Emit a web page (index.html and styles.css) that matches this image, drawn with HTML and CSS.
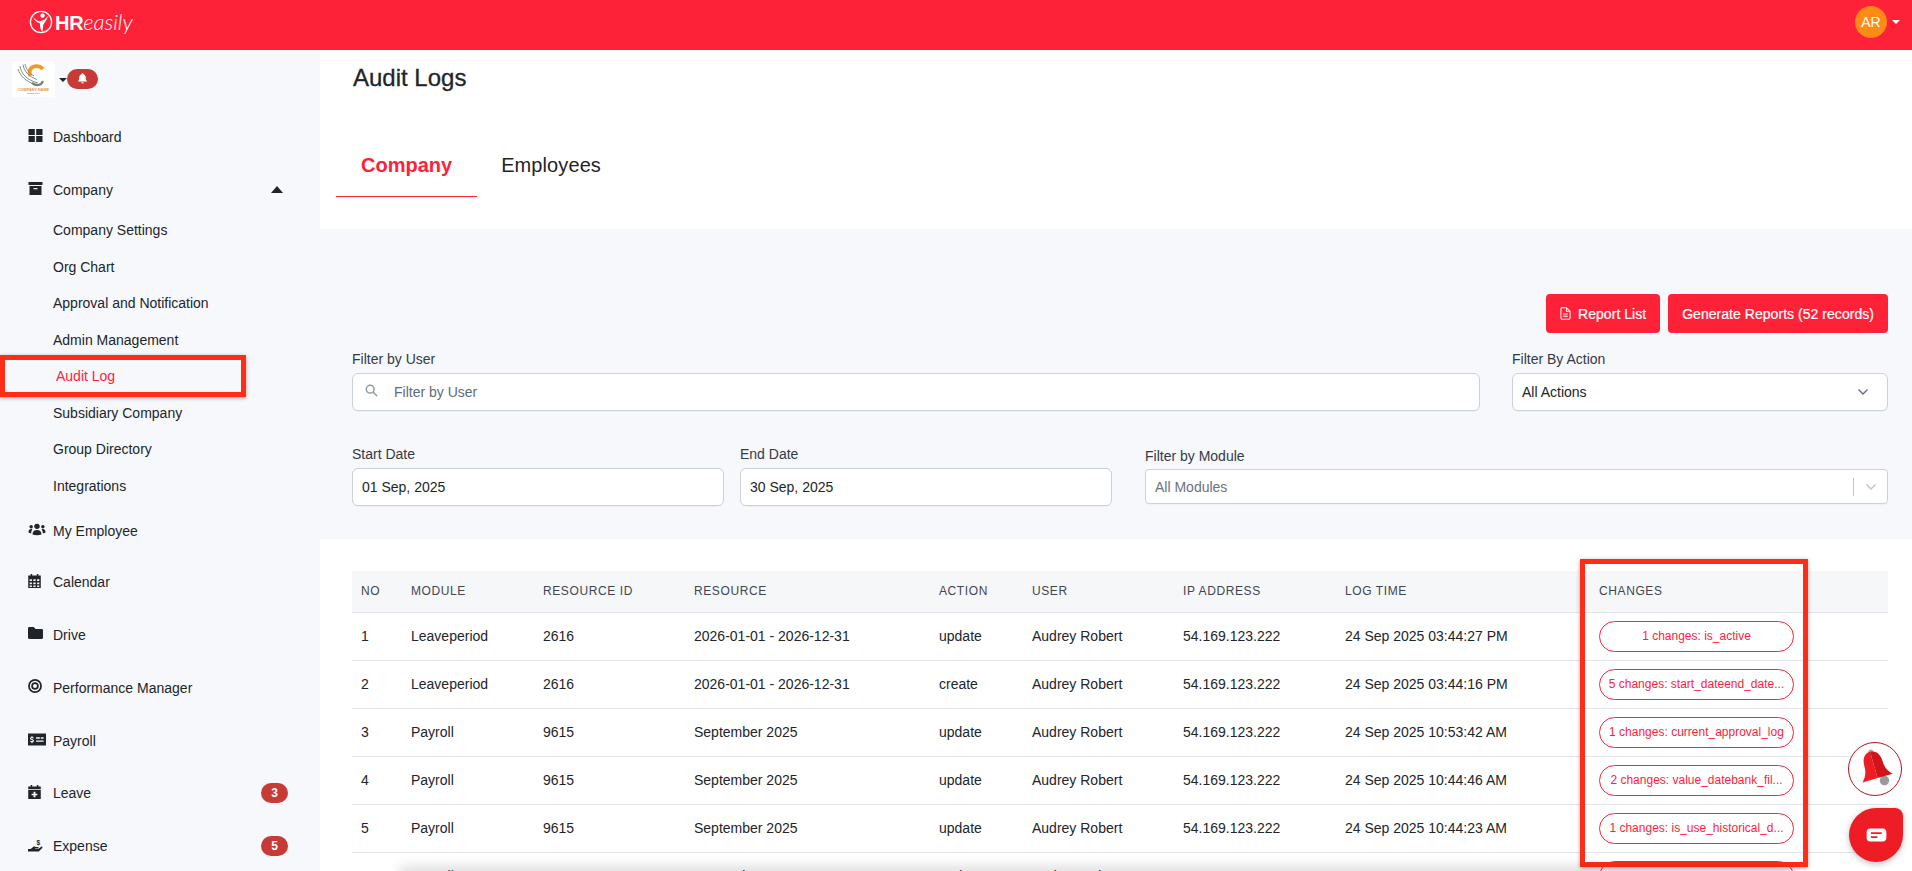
FILE: index.html
```html
<!DOCTYPE html>
<html lang="en">
<head>
<meta charset="utf-8">
<title>Audit Logs</title>
<link rel="stylesheet" href="styles.css">
</head>
<body>
<header class="topbar">
  <div class="brand">
    <svg class="brand-mark" viewBox="0 0 24 24" fill="none" stroke="#fff"><circle cx="12" cy="12" r="10.600" stroke-width="1.300"/><circle cx="13.500" cy="5.600" r="2.200" fill="#fff" stroke="none"/><path d="M4 6.500c2 3.500 4.500 4.500 7 4.800l4.600-1.800 4-4-3 5.800-2.200 3.200-1 7.500c-2-2.500-2.600-5.500-2.400-8.600C8 12.500 5 10.500 4 6.500z" fill="#fff" stroke="none"/></svg>
    <span class="brand-name"><b>HR</b><i>easily</i></span>
  </div>
  <div class="account"><span class="avatar">AR</span><span class="caret-down white"></span></div>
</header>
<div class="shell">
  <aside class="sidebar">
    <div class="org">
      <svg class="org-logo" viewBox="0 0 43 36" fill="none">
        <rect width="43" height="36" fill="#fff"/>
        <path d="M31 8c-4-4-11-4-13 1-.8 2-.6 4 .5 6" stroke="#f59a23" stroke-width="3.800"/>
        <path d="M8 5c1 8 7 14 18 17M11 3.500c1 7 6 12 14 15M6 8c2 7 8 13 19 16M13 3c1 5 4 9 9 12" stroke="#6f8385" stroke-width=".9"/>
        <path d="M20 22c4 3 9 3 11-2" stroke="#6f8385" stroke-width="2.200"/>
        <text x="21.500" y="29.800" class="org-name" text-anchor="middle">COMPANY NAME</text>
        <text x="21.500" y="33" class="org-tag" text-anchor="middle">slogan here</text>
      </svg>
      <span class="caret-down small"></span>
      <span class="bell-pill"><svg viewBox="1.500 1.500 13 13.500" class="bell-ico"><path d="M8 1.500c-.6 0-1 .4-1 1v.5C5 3.500 4 5.200 4 7c0 3-1 4-2 5h12c-1-1-2-2-2-5 0-1.800-1-3.500-3-4v-.500c0-.6-.4-1-1-1zM6.500 13a1.500 1.500 0 0 0 3 0z" fill="#fff"/></svg></span>
    </div>
    <nav class="nav">
      <a class="nav-item"><svg class="ico" viewBox="1 1.500 14 13"><path d="M1 1.500h6.300v6H1zM8.700 1.500H15v6H8.700zM1 8.500h6.300v6H1zM8.700 8.500H15v6H8.700z"/></svg>Dashboard</a>
      <a class="nav-item"><svg class="ico" viewBox="1 1 14 13"><path d="M1 1h14v3H1zM2 5h12v9H2zM6 7v1.300h4V7z" fill-rule="evenodd"/></svg>Company<span class="caret-up"></span></a>
      <div class="subnav">
        <a class="sub-item">Company Settings</a>
        <a class="sub-item">Org Chart</a>
        <a class="sub-item">Approval and Notification</a>
        <a class="sub-item">Admin Management</a>
        <a class="sub-item active">Audit Log</a>
        <a class="sub-item">Subsidiary Company</a>
        <a class="sub-item">Group Directory</a>
        <a class="sub-item">Integrations</a>
      </div>
      <a class="nav-item"><svg class="ico wide" viewBox="0 1 20 13"><circle cx="10" cy="4" r="3"/><circle cx="3.500" cy="4.500" r="1.900"/><circle cx="16.500" cy="4.500" r="1.900"/><path d="M5 13c0-3 1.500-5 5-5s5 2 5 5c-3 1-7 1-10 0zM.5 10.500c0-2 1-3.500 3-3.500.6 0 1 .1 1.400.4C3.900 8.500 3.500 10 3.500 11.800 2 11.700 1 11.300.5 10.500zM19.500 10.500c0-2-1-3.500-3-3.500-.6 0-1 .1-1.400.4 1 1.100 1.400 2.600 1.400 4.400 1.500-.1 2.500-.5 3-1.300z"/></svg>My Employee</a>
      <a class="nav-item"><svg class="ico narrow" viewBox="1.500 .5 13 14.500"><path fill-rule="evenodd" d="M4 .5h1.600V2h4.800V.5H12V2h2.500v13h-13V2H4zM3 6v1.700h2.300V6zM6.800 6v1.700h2.400V6zM10.700 6v1.700H13V6zM3 9.200V11h2.300V9.200zM6.800 9.200V11h2.400V9.200zM10.700 9.200V11H13V9.200zM3 12.300V14h2.300v-1.700zM6.800 12.300V14h2.400v-1.700zM10.700 12.300V14H13v-1.700z"/></svg>Calendar</a>
      <a class="nav-item"><svg class="ico short" viewBox=".5 2 15 11.800"><path d="M.5 3.500C.5 2.700 1 2 1.800 2h4.400l1.800 2h6.300c.8 0 1.200.6 1.200 1.300v7.200c0 .8-.5 1.300-1.200 1.300H1.800c-.8 0-1.300-.5-1.300-1.300z"/></svg>Drive</a>
      <a class="nav-item"><svg class="ico outline" viewBox="0 0 16 16"><circle cx="8" cy="8" r="6.900" stroke-width="2"/><circle cx="8" cy="8" r="3.300" stroke-width="2"/></svg>Performance Manager</a>
      <a class="nav-item"><svg class="ico wide" viewBox=".5 2 19 12.500"><path fill-rule="evenodd" d="M.5 2h19v12.500H.5zM9 6v1.500h4V6zM14 6v1.500h3V6zM9 9.300v1.400h8V9.300zM4.200 4.500v1.200c-1 .2-1.500.8-1.500 1.500 0 1.800 2.900 1.300 2.900 2.300 0 .7-1.700.5-2.700.1v1.100c.4.2.8.3 1.300.4v1.200h1v-1.200c1-.2 1.600-.8 1.600-1.600 0-1.800-3-1.500-3-2.300 0-.6 1.500-.4 2.500-.1V5.900c-.3-.1-.7-.2-1.100-.3V4.500z"/></svg>Payroll</a>
      <a class="nav-item"><svg class="ico narrow" viewBox="1.500 .5 13 14.500"><path fill-rule="evenodd" d="M4 .5h1.600V2h4.800V.5H12V2h2.500v13h-13V2H4zM1.500 5v.8h13V5zM7 7.500v2H5v1.600h2v2h2v-2h2V9.500H9v-2z"/></svg>Leave<span class="count">3</span></a>
      <a class="nav-item"><svg class="ico tall" viewBox="0 0 16 16"><path d="M0 12.300h2.800l2.600-2.200c.9-.7 1.900-.7 2.700 0h2.600c.9 0 .9 1.400 0 1.400H7.800c-.4 0-.4.5 0 .5h3.400l2.900-2.100c.9-.6 1.900.5 1.100 1.200L11.600 15H0z"/><text x="9" y="7.500" class="ico-dollar">$</text></svg>Expense<span class="count">5</span></a>
    </nav>
  </aside>
  <main class="main">
    <section class="head">
      <h1 class="title">Audit Logs</h1>
      <div class="tabs">
        <a class="tab current">Company</a>
        <a class="tab">Employees</a>
      </div>
    </section>
    <section class="filters">
      <div class="actions">
        <button class="btn"><svg class="btn-ico" viewBox="0 0 12 14" fill="none" stroke="#fff" stroke-width="1.100"><path d="M1 1.800c0-.6.4-1 1-1h5l4 3.700v7.700c0 .6-.4 1-1 1H2c-.6 0-1-.4-1-1z"/><path d="M7 .8v3.700h4M3.500 7.500h5M3.500 10h5"/></svg>Report List</button>
        <button class="btn">Generate Reports (52 records)</button>
      </div>
      <div class="row-one">
        <div class="field"><label class="label">Filter by User</label>
          <div class="control search"><svg class="search-ico" viewBox="0 0 14 14" fill="none" stroke="#8d97a5" stroke-width="1.600"><circle cx="5.600" cy="5.600" r="4.200"/><path d="M8.800 8.800L13 13"/></svg><span class="placeholder">Filter by User</span></div></div>
        <div class="field"><label class="label">Filter By Action</label>
          <div class="control between"><span>All Actions</span><svg class="chev" viewBox="0 0 12 8" fill="none" stroke="#5f6b7a" stroke-width="1.300"><path d="M1.500 1.500L6 6l4.500-4.500"/></svg></div></div>
      </div>
      <div class="row-two">
        <div class="field"><label class="label">Start Date</label><div class="control">01 Sep, 2025</div></div>
        <div class="field"><label class="label">End Date</label><div class="control">30 Sep, 2025</div></div>
        <div class="field module"><label class="label">Filter by Module</label>
          <div class="control select-like"><span class="muted">All Modules</span><span class="sep"></span><svg class="chev light" viewBox="0 0 12 8" fill="none" stroke="#c4c4c4" stroke-width="1.500"><path d="M1.500 1.500L6 6l4.500-4.500"/></svg></div></div>
      </div>
    </section>
    <section class="results">
      <table class="log">
        <colgroup><col class="c1"><col class="c2"><col class="c3"><col class="c4"><col class="c5"><col class="c6"><col class="c7"><col class="c8"><col></colgroup>
        <thead><tr><th>NO</th><th>MODULE</th><th>RESOURCE ID</th><th>RESOURCE</th><th>ACTION</th><th>USER</th><th>IP ADDRESS</th><th>LOG TIME</th><th>CHANGES</th></tr></thead>
        <tbody>
          <tr><td>1</td><td>Leaveperiod</td><td>2616</td><td>2026-01-01 - 2026-12-31</td><td>update</td><td>Audrey Robert</td><td>54.169.123.222</td><td>24 Sep 2025 03:44:27 PM</td><td><span class="pill">1 changes: is_active</span></td></tr>
          <tr><td>2</td><td>Leaveperiod</td><td>2616</td><td>2026-01-01 - 2026-12-31</td><td>create</td><td>Audrey Robert</td><td>54.169.123.222</td><td>24 Sep 2025 03:44:16 PM</td><td><span class="pill">5 changes: start_dateend_date...</span></td></tr>
          <tr><td>3</td><td>Payroll</td><td>9615</td><td>September 2025</td><td>update</td><td>Audrey Robert</td><td>54.169.123.222</td><td>24 Sep 2025 10:53:42 AM</td><td><span class="pill">1 changes: current_approval_log</span></td></tr>
          <tr><td>4</td><td>Payroll</td><td>9615</td><td>September 2025</td><td>update</td><td>Audrey Robert</td><td>54.169.123.222</td><td>24 Sep 2025 10:44:46 AM</td><td><span class="pill">2 changes: value_datebank_fil...</span></td></tr>
          <tr><td>5</td><td>Payroll</td><td>9615</td><td>September 2025</td><td>update</td><td>Audrey Robert</td><td>54.169.123.222</td><td>24 Sep 2025 10:44:23 AM</td><td><span class="pill">1 changes: is_use_historical_d...</span></td></tr>
          <tr><td>6</td><td>Payroll</td><td>9615</td><td>September 2025</td><td>update</td><td>Audrey Robert</td><td>54.169.123.222</td><td>24 Sep 2025 10:44:01 AM</td><td><span class="pill">1 changes</span></td></tr>
        </tbody>
      </table>
    </section>
  </main>
</div>
<div class="mark mark-nav"></div>
<div class="mark mark-col"></div>
<div class="fade"></div>
<div class="float-bell"><svg viewBox="0 0 40 40"><circle cx="29" cy="31" r="4.500" fill="#999"/><circle cx="16" cy="4" r="2.500" fill="#aaa"/><g transform="rotate(-16 20 20)"><path d="M20 3c-6 0-9 5-9 12 0 6-2 10-6 14h15z" fill="#ee1c25"/><path d="M20 3c6 0 9 5 9 12 0 6 2 10 6 14H20z" fill="#cf141c"/></g></svg></div>
<div class="float-chat"><svg viewBox="0 0 22 16"><path fill-rule="evenodd" d="M4 .5h14c2 0 3.500 1.500 3.500 3.500v7c0 2-1.500 3.500-3.500 3.500H4c-2 0-3.500-1.500-3.500-3.500V4C.5 2 2 .5 4 .5zM5 4.500v2h11.500v-2zM5 8.700v2h7v-2z" fill="#fff"/></svg></div>
</body>
</html>
```
FILE: styles.css
```css
* { box-sizing: border-box; }
html, body { margin: 0; height: 871px; overflow: hidden; }
body { font-family: "Liberation Sans", Arial, sans-serif; font-size: 14px; color: #212529; background: #fff; }
a { color: inherit; text-decoration: none; }

.topbar { height: 50px; background: #fe2238; display: flex; align-items: center; justify-content: space-between; padding: 0 12px 6px 29px; }
.brand { display: flex; align-items: center; gap: 2px; color: #fff; }
.brand-mark { width: 24px; height: 24px; }
.brand-name { font-size: 20px; line-height: 24px; }
.brand-name b { font-weight: 700; letter-spacing: -.3px; }
.brand-name i { font-weight: 300; font-family: "Lato", sans-serif; font-size: 22px; }
.account { display: flex; align-items: center; gap: 5px; }
.avatar { width: 32px; height: 32px; border-radius: 50%; background: #ff8b17; color: #fff; display: flex; align-items: center; justify-content: center; font-size: 14px; }
.caret-down { width: 0; height: 0; border-left: 4px solid transparent; border-right: 4px solid transparent; border-top: 4px solid #212529; }
.caret-down.white { border-top-color: #fff; border-left-width: 4.5px; border-right-width: 4.5px; }

.shell { display: flex; height: 821px; }
.sidebar { width: 320px; flex: none; background: #f6f8fc; padding: 11px 0 0 12px; }
.org { display: flex; align-items: center; height: 36px; }
.org-logo { width: 43px; height: 36px; flex: none; }
.org-name { font: 700 3.800px "Liberation Sans", sans-serif; fill: #e8952a; }
.org-tag { font: 2.500px "Liberation Sans", sans-serif; fill: #666; }
.caret-down.small { margin: 2px 0 0 4px; }
.bell-pill { width: 31px; height: 20px; margin: -1px 0 0 0; border-radius: 10px; background: #c73a35; display: flex; align-items: center; justify-content: center; }
.bell-ico { width: 11px; height: 11px; }

.nav { margin-top: 14px; margin-left: -12px; display: flex; flex-direction: column; color: #212529; }
.nav-item { display: flex; align-items: center; height: 52.8px; padding-left: 28px; font-size: 14px; }
.ico { width: 15px; height: 13px; margin: -3px 10px 0 0; fill: #212529; flex: none; }
.ico.wide { width: 18px; height: 13px; margin-right: 7px; }
.ico.narrow { width: 13px; height: 14px; margin-right: 12px; }
.ico.short { height: 12px; }
.ico.tall { height: 16px; }
.ico.outline { width: 14px; height: 14px; margin-right: 11px; fill: none; stroke: #212529; }
.ico-dollar { font: 700 7px "Liberation Sans", sans-serif; fill: #212529; }
.caret-up { margin: -1px 37px 0 auto; width: 0; height: 0; border-left: 6px solid transparent; border-right: 6px solid transparent; border-bottom: 7px solid #212529; }
.subnav { display: flex; flex-direction: column; margin-top: -4.5px; margin-bottom: 1.3px; }
.subnav + .nav-item { height: 50.4px; }
.sub-item { height: 36.5px; display: flex; align-items: center; padding-left: 53px; }
.sub-item.active { color: #fe2238; padding-left: 56px; }
.count { margin: -1px 32px 0 auto; width: 27px; height: 20px; border-radius: 10px; background: #c73a35; color: #fff; font-weight: 700; font-size: 12px; display: flex; align-items: center; justify-content: center; }

.main { flex: 1; min-width: 0; background: #fff; overflow: hidden; }
.head { height: 179px; padding: 13px 24px 0 16px; }
.title { margin: 0 0 0 17px; font-size: 24px; line-height: 29px; font-weight: 400; color: #212529; -webkit-text-stroke: .3px #212529; }
.tabs { display: flex; margin-top: 44px; }
.tab { padding: 18px 25px 19px; font-size: 20px; line-height: 23px; color: #1f1f1f; letter-spacing: .1px; border-bottom: 1px solid transparent; }
.tab + .tab { padding-left: 24px; }
.tab.current { color: #fe2238; font-weight: 700; letter-spacing: 0; border-bottom-color: #fe2238; }

.filters { height: 310px; background: #f6f8fc; padding: 65px 24px 0 32px; }
.actions { display: flex; justify-content: flex-end; gap: 8px; }
.btn { height: 39px; border: 0; border-radius: 4px; background: #fe2238; color: #fff; font: 14px "Liberation Sans", Arial, sans-serif; letter-spacing: .04px; padding: 0 14px; display: flex; align-items: center; gap: 7px; -webkit-text-stroke: .2px #fff; }
.btn-ico { width: 11px; height: 13px; }
.row-one { display: grid; grid-template-columns: 1128px 376px; gap: 32px; margin-top: 18px; }
.row-two { display: grid; grid-template-columns: 372px 372px 760px; gap: 16px; margin-top: 35px; }
.field { display: flex; flex-direction: column; gap: 6px; }
.label { font-size: 14px; line-height: 16px; color: #343a46; }
.control { height: 38px; background: #fff; border: 1px solid #ccd0d8; border-radius: 6px; display: flex; align-items: center; padding: 0 9px; font-size: 14px; color: #212529; box-shadow: 0 1px 1px rgba(0,0,0,.03); }
.between { justify-content: space-between; padding-right: 18px; }
.search { padding-left: 12px; gap: 16px; }
.search-ico { width: 13px; height: 13px; margin-top: -4px; }
.placeholder { color: #5f6b7a; }
.chev { width: 12px; height: 8px; }
.module { margin-left: 17px; margin-top: 2px; gap: 5px; width: 743px; }
.select-like { height: 35px; border-radius: 4px; }
.muted { color: #6b7280; font-size: 14px; flex: 1; }
.sep { width: 1px; height: 18px; background: #c4c4c4; margin-right: 11px; }
.chev.light { margin-right: 1px; }

.results { padding: 32px 24px 0 32px; }
.log { width: 1536px; border-collapse: collapse; table-layout: fixed; font-size: 14px; }
.c1 { width: 50px; } .c2 { width: 132px; } .c3 { width: 151px; } .c4 { width: 245px; }
.c5 { width: 93px; } .c6 { width: 151px; } .c7 { width: 162px; } .c8 { width: 254px; }
.log th { height: 41px; background: #f6f7f9; text-align: left; font-size: 12px; font-weight: 400; letter-spacing: .6px; color: #3f4650; padding: 0 9px; border-bottom: 1px solid #e2e4ea; }
.log td { height: 48px; padding: 0 9px; color: #212529; border-bottom: 1px solid #e2e4ea; white-space: nowrap; }
.pill { display: block; width: 195px; height: 31px; line-height: 29px; border: 1px solid #fe2238; border-radius: 16px; color: #fe2238; font-size: 12px; text-align: center; overflow: hidden; white-space: nowrap; }

.mark { position: absolute; border: 5px solid #ff2d16; box-shadow: 0 1px 4px rgba(0,0,0,.35); }
.mark-nav { left: 0; top: 355px; width: 246px; height: 42px; }
.mark-col { left: 1580px; top: 559px; width: 228px; height: 308px; }
.fade { position: absolute; left: 400px; right: 120px; top: 871px; height: 10px; box-shadow: 0 -4px 12px rgba(0,0,0,.16); }
.float-bell { position: absolute; left: 1848px; top: 742px; width: 54px; height: 54px; border-radius: 50%; border: 1.500px solid #b3161c; background: #fff; display: flex; align-items: center; justify-content: center; }
.float-bell svg { width: 42px; height: 42px; }
.float-chat { position: absolute; left: 1849px; top: 808px; width: 54px; height: 54px; background: #ee1c25; border-radius: 27px 8px 27px 27px; box-shadow: 0 2px 6px rgba(0,0,0,.25); display: flex; align-items: center; justify-content: center; }
.float-chat svg { width: 21px; height: 15px; }
```
